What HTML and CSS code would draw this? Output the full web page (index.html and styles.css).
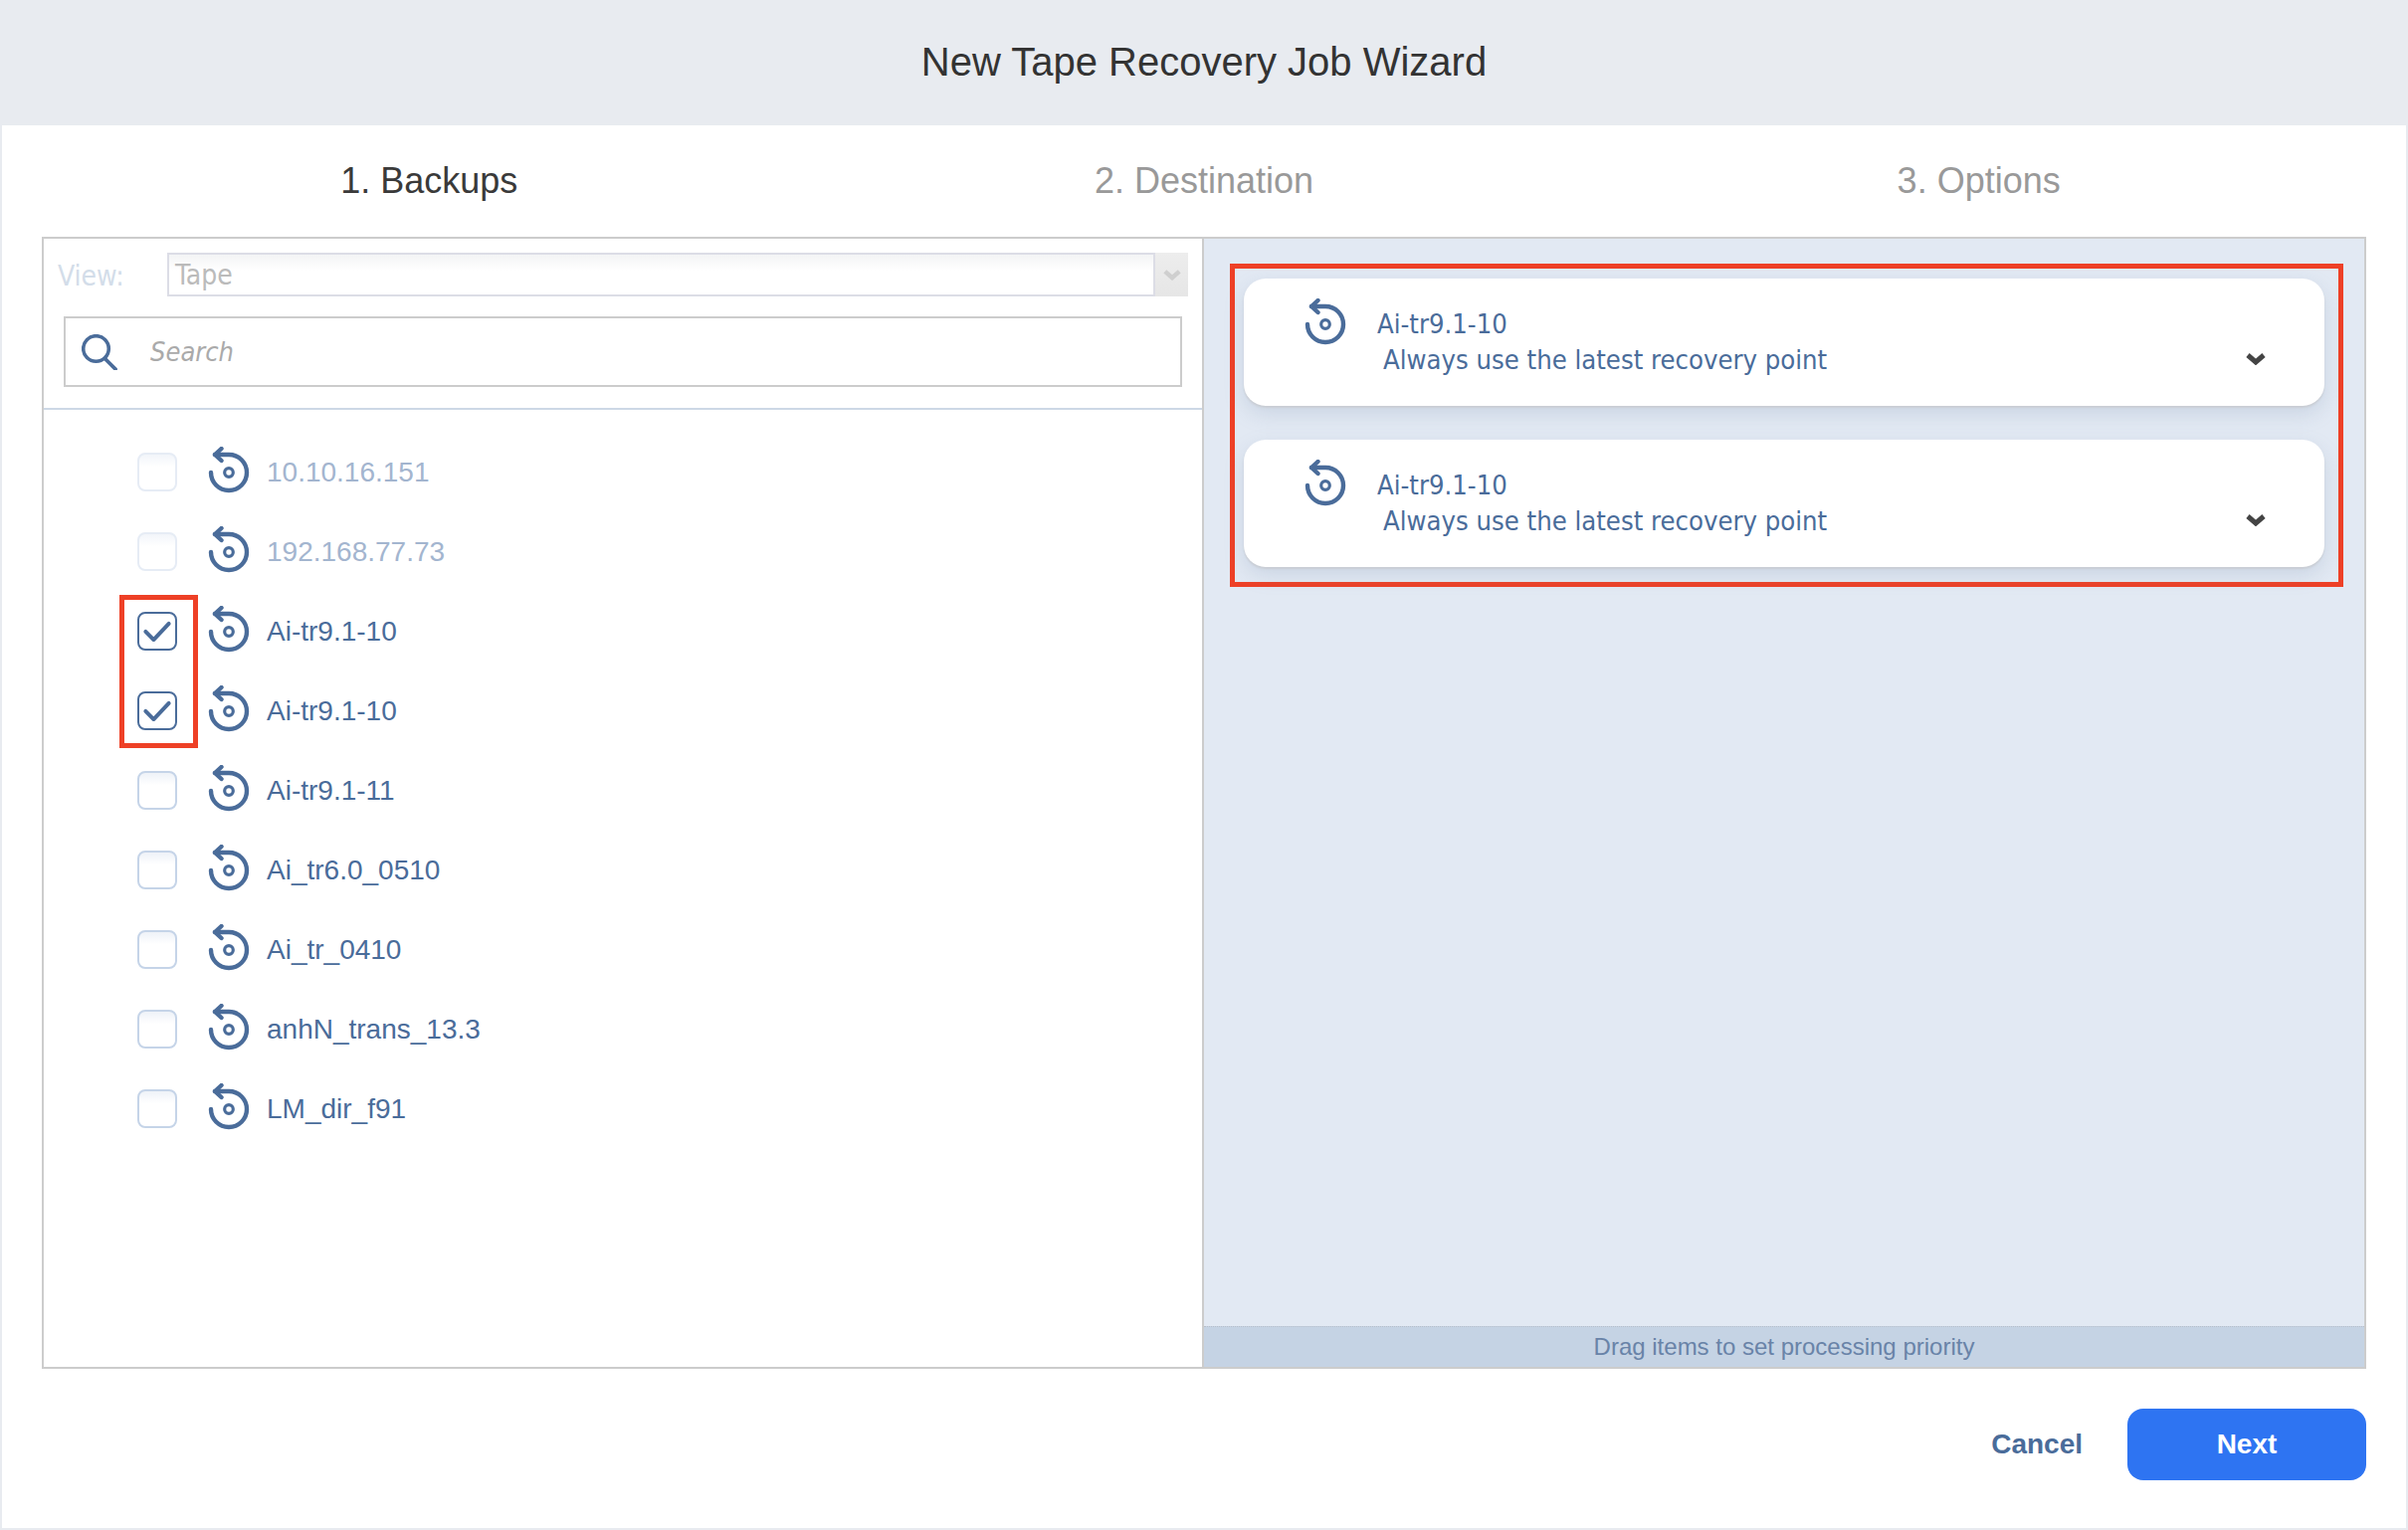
FILE: index.html
```html
<!DOCTYPE html>
<html lang="en">
<head>
<meta charset="utf-8">
<title>New Tape Recovery Job Wizard</title>
<link rel="stylesheet" href="styles.css">
</head>
<body>
<svg class="defs" width="0" height="0" aria-hidden="true">
  <symbol id="replay" viewBox="0 0 44 50">
    <path d="M8 8H22A18 18 0 1 1 4 26" fill="none" stroke="currentColor" stroke-width="4.4" stroke-linecap="round"/>
    <path d="M14.5 2L8 8L14.5 14" fill="none" stroke="currentColor" stroke-width="4.4" stroke-linecap="round" stroke-linejoin="round"/>
    <circle cx="22" cy="26" r="4.3" fill="none" stroke="currentColor" stroke-width="3.2"/>
  </symbol>
  <symbol id="tick" viewBox="0 0 40 39">
    <path d="M7 20L16 29L33 11" fill="none" stroke="currentColor" stroke-width="4.4" stroke-linecap="round" stroke-linejoin="round"/>
  </symbol>
  <symbol id="chev" viewBox="0 0 20 12">
    <path d="M2 2L10 9L18 2" fill="none" stroke="currentColor" stroke-width="5"/>
  </symbol>
</svg>
<div class="wizard">
  <header class="head">New Tape Recovery Job Wizard</header>
  <main class="body">
    <nav class="tabs">
      <div class="tab active">1. Backups</div>
      <div class="tab">2. Destination</div>
      <div class="tab">3. Options</div>
    </nav>
    <section class="panel">
      <div class="left">
        <div class="viewrow">
          <span class="viewlabel">View:</span>
          <div class="select">
            <span class="selval">Tape</span>
            <span class="selarrow"><svg class="selchev"><use href="#chev"/></svg></span>
          </div>
        </div>
        <div class="search">
          <svg class="searchicon" viewBox="0 0 36 36"><circle cx="14.5" cy="14.5" r="12.8" fill="none" stroke="currentColor" stroke-width="3.6"/><path d="M24 25L34 35" fill="none" stroke="currentColor" stroke-width="3.8" stroke-linecap="round"/></svg>
          <span class="searchtext">Search</span>
        </div>
        <div class="list">
          <div class="row disabled"><span class="cb"></span><svg class="ico"><use href="#replay"/></svg><span class="name">10.10.16.151</span></div>
          <div class="row disabled"><span class="cb"></span><svg class="ico"><use href="#replay"/></svg><span class="name">192.168.77.73</span></div>
          <div class="row"><span class="cb checked"><svg class="tick"><use href="#tick"/></svg></span><svg class="ico"><use href="#replay"/></svg><span class="name">Ai-tr9.1-10</span></div>
          <div class="row"><span class="cb checked"><svg class="tick"><use href="#tick"/></svg></span><svg class="ico"><use href="#replay"/></svg><span class="name">Ai-tr9.1-10</span></div>
          <div class="row"><span class="cb"></span><svg class="ico"><use href="#replay"/></svg><span class="name">Ai-tr9.1-11</span></div>
          <div class="row"><span class="cb"></span><svg class="ico"><use href="#replay"/></svg><span class="name">Ai_tr6.0_0510</span></div>
          <div class="row"><span class="cb"></span><svg class="ico"><use href="#replay"/></svg><span class="name">Ai_tr_0410</span></div>
          <div class="row"><span class="cb"></span><svg class="ico"><use href="#replay"/></svg><span class="name">anhN_trans_13.3</span></div>
          <div class="row"><span class="cb"></span><svg class="ico"><use href="#replay"/></svg><span class="name">LM_dir_f91</span></div>
          <div class="mark"></div>
        </div>
      </div>
      <div class="right">
        <div class="rightmain">
          <div class="cards">
            <div class="card">
              <svg class="ico"><use href="#replay"/></svg>
              <div class="cardtext"><div class="cardname">Ai-tr9.1-10</div><div class="cardsub">Always use the latest recovery point</div></div>
              <svg class="chev"><use href="#chev"/></svg>
            </div>
            <div class="card">
              <svg class="ico"><use href="#replay"/></svg>
              <div class="cardtext"><div class="cardname">Ai-tr9.1-10</div><div class="cardsub">Always use the latest recovery point</div></div>
              <svg class="chev"><use href="#chev"/></svg>
            </div>
          </div>
        </div>
        <div class="status">Drag items to set processing priority</div>
      </div>
    </section>
    <footer class="foot">
      <span class="cancel">Cancel</span>
      <span class="next">Next</span>
    </footer>
  </main>
</div>
</body>
</html>
```
FILE: styles.css
```css
* { box-sizing: border-box; }
html, body { margin: 0; padding: 0; }
body { background: #fff; font-family: "Liberation Sans", Arial, sans-serif; }
.defs { position: absolute; }
.wizard { width: 2420px; height: 1538px; display: flex; flex-direction: column; }
.head {
  height: 126px; flex: none; background: #e8ebf0; color: #333;
  font-size: 40px; display: flex; align-items: center; justify-content: center; padding-bottom: 2px;
}
.body {
  flex: 1; display: flex; flex-direction: column; background: #fff;
  border-left: 2px solid #e8ebf0; border-right: 2px solid #e8ebf0; border-bottom: 2px solid #e8ebf0;
  padding: 0 40px;
}
.tabs { height: 112px; flex: none; display: grid; grid-template-columns: repeat(3, 1fr); align-items: center; }
.tab { text-align: center; font-size: 36px; color: #999; }
.tab.active { color: #3a3a3a; }
.panel { height: 1138px; flex: none; border: 2px solid #ccc; display: flex; }
.left { width: 1164px; flex: none; display: flex; flex-direction: column; }
.viewrow { display: flex; align-items: flex-start; height: 44px; flex: none; margin-top: 14px; padding-left: 14px; }
.viewlabel { width: 110px; height: 44px; font: 28px/48px "DejaVu Sans", sans-serif; font-stretch: condensed; color: #d3dde9; }
.select {
  width: 1026px; height: 44px; display: flex; border: 2px solid #dcdde6;
  background: linear-gradient(#f3f4f5, #fff 40%);
}
.selval { flex: 1; font: 28px "DejaVu Sans", sans-serif; font-stretch: condensed; color: #bbb; padding-left: 6px; line-height: 41px; }
.selarrow {
  width: 35px; border-left: 2px solid #dcdde6; background: linear-gradient(#ededed, #e6e6e6);
  display: flex; align-items: center; justify-content: center; margin: -2px -2px -2px 0;
}
.selchev { width: 18px; height: 11px; color: #cfcfcf; }
.search {
  margin: 20px 0 21px 20px; width: 1124px; height: 71px; flex: none; border: 2px solid #ccc;
  display: flex; align-items: center; padding-left: 16px;
}
.searchicon { width: 36px; height: 36px; color: #4a6c9a; flex: none; }
.searchtext { margin-left: 33px; font: italic 27px "DejaVu Sans", sans-serif; font-stretch: condensed; color: #aaa; }
.list { flex: 1; position: relative; border-top: 2px solid #cdd8e6; padding: 22px 0 0 94px; }
.row { height: 80px; display: flex; align-items: center; }
.cb {
  width: 40px; height: 39px; flex: none; border: 2px solid #c5d4e8; border-radius: 8px;
  background: linear-gradient(#eef2f8, #fff 35%); display: block;
}
.cb.checked { border-color: #4a6c9a; background: #fff; }
.tick { display: block; width: 36px; height: 35px; color: #4a6c9a; }
.ico { width: 44px; height: 50px; flex: none; color: #4a6c9a; }
.row .ico { margin-left: 30px; }
.name { margin-left: 16px; padding-top: 2px; font-size: 28px; color: #4a6c9a; }
.row.disabled .name { color: #a3b5cf; }
.row.disabled .cb { border-color: #e6ecf5; background: linear-gradient(#f2f5fa, #fff 35%); }
.mark { position: absolute; left: 76px; top: 186px; width: 79px; height: 154px; border: 5px solid #ee4026; }
.right { flex: 1; display: flex; flex-direction: column; border-left: 2px solid #ccc; background: #e2e9f3; }
.rightmain { flex: 1; padding: 25px 21px 0 26px; }
.cards { border: 5px solid #ee4026; padding: 10px 14px 15px 9px; display: flex; flex-direction: column; gap: 34px; }
.card {
  height: 128px; background: #fff; border-radius: 22px; position: relative;
  box-shadow: 0 2px 2px #c9cdd4, 0 8px 20px rgba(120, 140, 175, .22);
  display: flex; padding: 20px 0 0 60px;
}
.cardtext { margin-left: 30px; padding-top: 8px; font: 27.2px/36px "DejaVu Sans", sans-serif; font-stretch: condensed; color: #4a6c9a; }
.cardsub { margin-left: 6px; }
.chev { position: absolute; left: 1007px; top: 75px; width: 20px; height: 12px; color: #444; }
.status {
  height: 41px; flex: none; background: #c5d3e4; color: #6983a8; font-size: 24px;
  border-top: 1px dotted #b8bfca; text-align: center; line-height: 40px;
}
.foot { flex: 1; display: flex; justify-content: flex-end; align-items: flex-start; padding-top: 40px; }
.cancel { font-size: 28px; font-weight: 700; color: #4a6c9a; margin-right: 45px; line-height: 72px; }
.next {
  width: 240px; height: 72px; background: #2e74f2; color: #fff; border-radius: 16px;
  font-size: 28px; font-weight: 700; text-align: center; line-height: 72px;
}
```
